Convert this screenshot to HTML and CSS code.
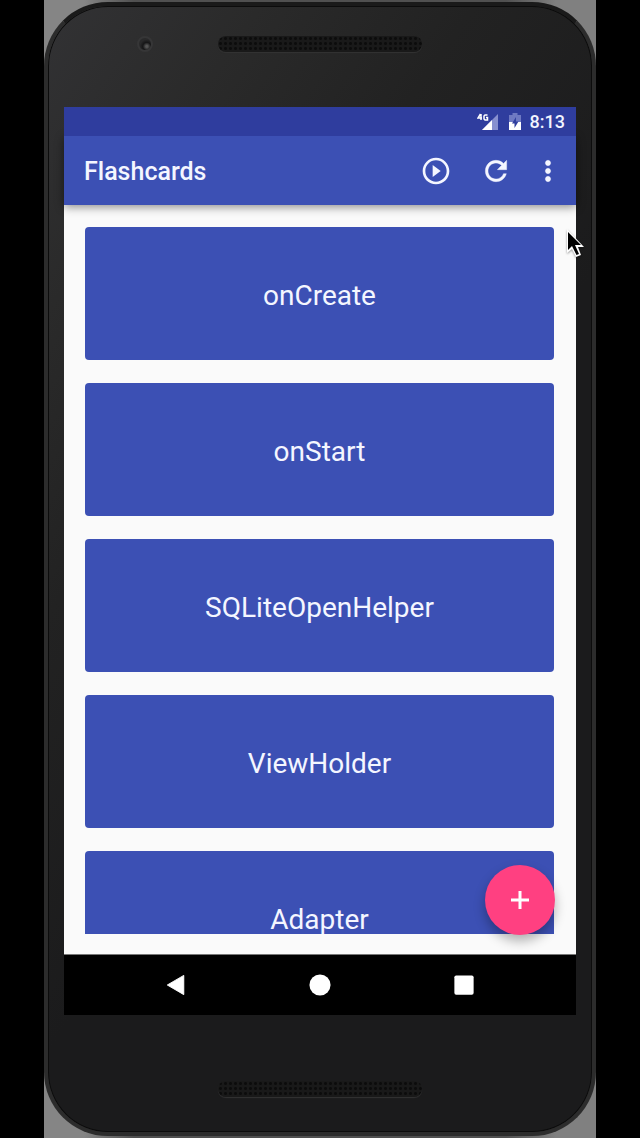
FILE: index.html
```html
<!DOCTYPE html>
<html lang="en">
<head>
<meta charset="utf-8">
<meta name="viewport" content="width=device-width, initial-scale=1">
<title>Flashcards</title>
<link rel="stylesheet" href="styles.css">
</head>
<body class="page">
<div class="backdrop">
<div class="phone">
  <div class="bezel bezel-top">
    <span class="camera"></span>
    <span class="speaker"></span>
    <span></span>
  </div>
  <div class="screen">
    <div class="status-bar">
      <svg class="status-signal" viewBox="0 0 22 18" aria-hidden="true">
        <path d="M5 17 21 1v16z" fill="#8790cf"/>
        <path d="M5 17 15 7v10z" fill="#fff"/>
        <path d="M3.500 1 1 5h4M4 1v6M10.500 2H8L7 3v3l1 1h2.500V4.500H9" fill="none" stroke="#fff" stroke-width="1.500"/>
      </svg>
      <svg class="status-battery" viewBox="0 0 12 18" aria-hidden="true">
        <path d="M0 2h3.500V0h5v2H12v7H0z" fill="#6e79c3"/>
        <path d="M0 9h12v8H0z" fill="#fff"/>
        <path d="M7 4 3 10.500h2.500V15L9.500 8.500H7z" fill="#303f9f"/>
      </svg>
      <time class="clock">8:13</time>
    </div>
    <header class="app-bar">
      <h1 class="title">Flashcards</h1>
      <button class="action" aria-label="Play">
        <svg class="icon" viewBox="0 0 24 24"><path fill="currentColor" d="M9.500 16.500l6-4.500-6-4.500v9zM12 2C6.480 2 2 6.480 2 12s4.480 10 10 10 10-4.480 10-10S17.520 2 12 2zm0 18c-4.410 0-8-3.590-8-8s3.590-8 8-8 8 3.590 8 8-3.590 8-8 8z"/></svg>
      </button>
      <button class="action" aria-label="Refresh">
        <svg class="icon" viewBox="0 0 24 24"><path fill="currentColor" stroke="currentColor" stroke-width=".3" d="M17.650 6.350C16.200 4.900 14.210 4 12 4c-4.420 0-7.990 3.580-7.990 8s3.570 8 7.990 8c3.730 0 6.840-2.550 7.730-6h-2.080c-.82 2.330-3.040 4-5.650 4-3.310 0-6-2.690-6-6s2.690-6 6-6c1.660 0 3.140.69 4.220 1.780L13 11h7V4l-2.350 2.350z"/></svg>
      </button>
      <button class="action action-more" aria-label="More options">
        <svg class="icon" viewBox="0 0 24 24"><path fill="currentColor" stroke="currentColor" stroke-width=".3" d="M12 8c1.100 0 2-.9 2-2s-.9-2-2-2-2 .9-2 2 .9 2 2 2zm0 2c-1.100 0-2 .9-2 2s.9 2 2 2 2-.9 2-2-.9-2-2-2zm0 6c-1.100 0-2 .9-2 2s.9 2 2 2 2-.9 2-2-.9-2-2-2z"/></svg>
      </button>
    </header>
    <main class="content">
      <div class="card-list">
        <button class="card">onCreate</button>
        <button class="card">onStart</button>
        <button class="card">SQLiteOpenHelper</button>
        <button class="card">ViewHolder</button>
        <button class="card">Adapter</button>
      </div>
      <button class="fab" aria-label="Add card">
        <svg class="fab-icon" viewBox="0 0 20 20"><path d="M10 1v18M1 10h18" stroke="currentColor" stroke-width="3"/></svg>
      </button>
      <svg class="cursor" viewBox="0 0 18 30" aria-hidden="true">
        <path d="M1 0v24l5-4 4 8 5-2-3-8h6z" fill="#fff"/>
        <path d="M2 3v18l4-4 4.500 9 2.500-1-4-9h6z" fill="#000"/>
      </svg>
    </main>
    <nav class="nav-bar">
      <button class="nav-button" aria-label="Back"><svg class="nav-icon" viewBox="0 0 24 24"><path d="M2.500 12 20.500 1.500v21z" fill="#fff" stroke="#fff" stroke-linejoin="round"/></svg></button>
      <button class="nav-button" aria-label="Home"><svg class="nav-icon" viewBox="0 0 24 24"><circle cx="12" cy="12" r="11.500" fill="#fff"/></svg></button>
      <button class="nav-button" aria-label="Overview"><svg class="nav-icon" viewBox="0 0 24 24"><rect x="1.500" y="1.500" width="21" height="21" rx="2" fill="#fff"/></svg></button>
    </nav>
  </div>
  <div class="bezel bezel-bottom">
    <span></span>
    <span class="speaker"></span>
    <span></span>
  </div>
</div>
</div>
</body>
</html>
```
FILE: styles.css
```css
* {
  box-sizing: border-box;
}

.page {
  margin: 0;
  padding: 0 44px;
  background: #000;
  font-family: Roboto, "Liberation Sans", sans-serif;
}

button {
  margin: 0;
  padding: 0;
  border: 0;
  background: none;
  color: inherit;
  font: inherit;
}

.backdrop {
  height: 100vh;
  min-height: 640px;
  padding: 2px 0;
  background: linear-gradient(90deg, #858585 0 40px, #505050 90px calc(100% - 90px), #808080 calc(100% - 40px));
}

.phone {
  display: flex;
  flex-direction: column;
  height: 100%;
  padding: 0 16px;
  border: 4px solid #2c2c2c;
  border-top-color: #1a1a1a;
  border-radius: 64px;
  background: linear-gradient(125deg, #323234 0%, #2a2a2a 16%, #222 32%, #1b1b1c 55%, #1b1b1c 100%);
  box-shadow: inset 0 0 0 1px #0c0c0c;
}

.bezel {
  display: grid;
  grid-template-columns: 1fr 204px 1fr;
  align-items: center;
  flex: none;
}

.bezel-top {
  height: 101px;
  padding-bottom: 26px;
}

.bezel-bottom {
  height: 117px;
  padding-top: 30px;
}

.camera {
  justify-self: center;
  width: 16px;
  height: 16px;
  margin-left: 8px;
  border: 2px solid #363637;
  border-radius: 50%;
  background: radial-gradient(circle at 65% 70%, #555 0 1px, #161617 4px, #29292a 7px);
}

.speaker {
  height: 16px;
  border-radius: 8px;
  background: radial-gradient(circle, #0c0c0c 1px, #191919 2px) 0 0 / 5px 5px;
  box-shadow: 0 1px 1px #333;
}

.screen {
  display: flex;
  flex: 1;
  flex-direction: column;
  min-height: 0;
  background: #fafafa;
}

.status-bar {
  position: relative;
  z-index: 2;
  display: flex;
  flex: none;
  align-items: center;
  justify-content: flex-end;
  height: 29px;
  padding-right: 11px;
  background: #2f3d9e;
  color: #f2f4ff;
}

.status-signal {
  width: 22px;
  height: 18px;
  margin-right: 10px;
}

.status-battery {
  width: 12px;
  height: 18px;
  margin-right: 9px;
}

.clock {
  font-size: 18px;
  font-weight: 500;
  line-height: 20px;
}

.app-bar {
  position: relative;
  z-index: 1;
  display: flex;
  flex: none;
  align-items: center;
  height: 69px;
  padding: 0 6px 0 20px;
  background: #3c50b4;
  box-shadow: 0 2px 9px rgba(0, 0, 0, 0.45);
  color: #f4f6ff;
}

.title {
  flex: 1;
  margin: 2px 0 0;
  font-size: 25px;
  font-weight: 500;
  line-height: 32px;
}

.action {
  display: grid;
  place-items: center;
  width: 60px;
  height: 60px;
}

.action-more {
  width: 44px;
}

.icon {
  width: 32px;
  height: 32px;
}

.content {
  position: relative;
  flex: 1;
  min-height: 0;
  padding: 22px 22px 20px 21px;
  border-bottom: 1px solid #777;
}

.card-list {
  display: flex;
  flex-direction: column;
  gap: 23px;
  height: 100%;
  overflow: hidden;
}

.card {
  flex: none;
  height: 133px;
  padding: 4px 0 0;
  border-radius: 4px;
  background: #3c50b4;
  color: #f4f6ff;
  font-size: 28px;
  line-height: 32px;
}

.fab {
  position: absolute;
  right: 21px;
  bottom: 19px;
  display: grid;
  place-items: center;
  width: 70px;
  height: 70px;
  border-radius: 50%;
  background: #ff4081;
  box-shadow: 0 6px 12px rgba(0, 0, 0, 0.3);
  color: #fff;
}

.fab-icon {
  width: 20px;
  height: 20px;
}

.cursor {
  position: absolute;
  z-index: 2;
  top: 24px;
  right: -8px;
  width: 18px;
  height: 30px;
  filter: drop-shadow(0 1px 1px rgba(0, 0, 0, 0.4));
}

.nav-bar {
  display: flex;
  flex: none;
  justify-content: center;
  height: 60px;
  background: #000;
}

.nav-button {
  display: grid;
  place-items: center;
  width: 144px;
}

.nav-icon {
  width: 22px;
  height: 22px;
}
```
